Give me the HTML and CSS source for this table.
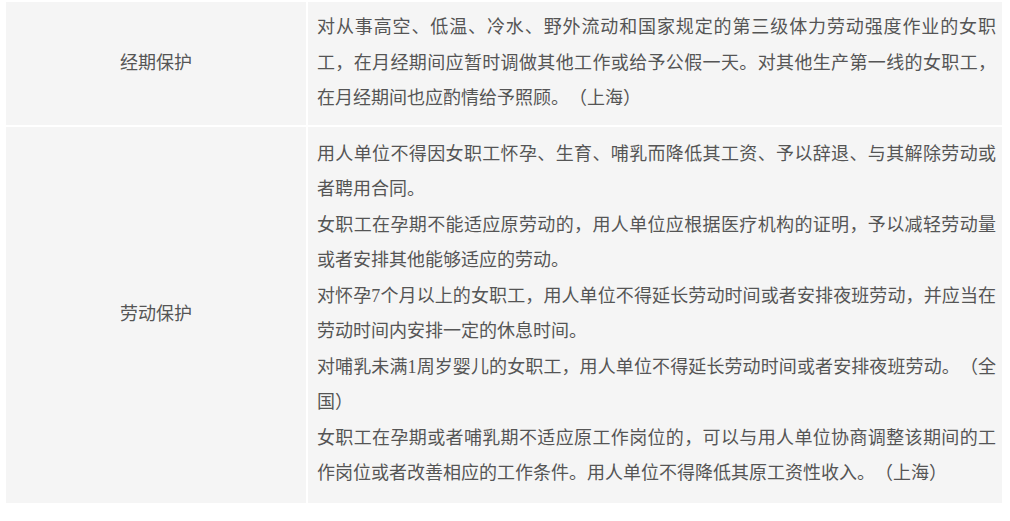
FILE: index.html
```html
<!DOCTYPE html>
<html lang="zh-CN">
<head>
<meta charset="utf-8">
<title>女职工保护</title>
<link rel="stylesheet" href="styles.css">
</head>
<body>
<table class="policy">
  <tbody>
    <tr class="row row-short">
      <td class="label">经期保护</td>
      <td class="content">
        <p>对从事高空、低温、冷水、野外流动和国家规定的第三级体力劳动强度作业的女职工，在月经期间应暂时调做其他工作或给予公假一天。对其他生产第一线的女职工，在月经期间也应酌情给予照顾。（上海）</p>
      </td>
    </tr>
    <tr class="row row-long">
      <td class="label">劳动保护</td>
      <td class="content">
        <p>用人单位不得因女职工怀孕、生育、哺乳而降低其工资、予以辞退、与其解除劳动或者聘用合同。</p>
        <p>女职工在孕期不能适应原劳动的，用人单位应根据医疗机构的证明，予以减轻劳动量或者安排其他能够适应的劳动。</p>
        <p>对怀孕7个月以上的女职工，用人单位不得延长劳动时间或者安排夜班劳动，并应当在劳动时间内安排一定的休息时间。</p>
        <p>对哺乳未满1周岁婴儿的女职工，用人单位不得延长劳动时间或者安排夜班劳动。（全国）</p>
        <p>女职工在孕期或者哺乳期不适应原工作岗位的，可以与用人单位协商调整该期间的工作岗位或者改善相应的工作条件。用人单位不得降低其原工资性收入。（上海）</p>
      </td>
    </tr>
  </tbody>
</table>
</body>
</html>
```
FILE: styles.css
```css
html, body {
  margin: 0;
  padding: 0;
  background: #ffffff;
}

body {
  font-family: "Liberation Serif", "Noto Sans CJK SC", sans-serif;
  font-size: 18px;
  color: #555555;
}

.policy {
  margin: 0 0 0 4px;
  width: 1000px;
  border-collapse: separate;
  border-spacing: 2px;
  table-layout: fixed;
}

.policy td {
  background: #f5f5f5;
  vertical-align: middle;
  line-height: 35.5px;
}

.label {
  width: 300px;
  text-align: center;
  padding: 0;
}

.content {
  text-align: justify;
  text-spacing-trim: space-all;
  padding: 8px 6px 8px 9px;
}

.row-long .content {
  padding-top: 10px;
  padding-bottom: 11px;
}

.content p {
  margin: 0;
}
```
